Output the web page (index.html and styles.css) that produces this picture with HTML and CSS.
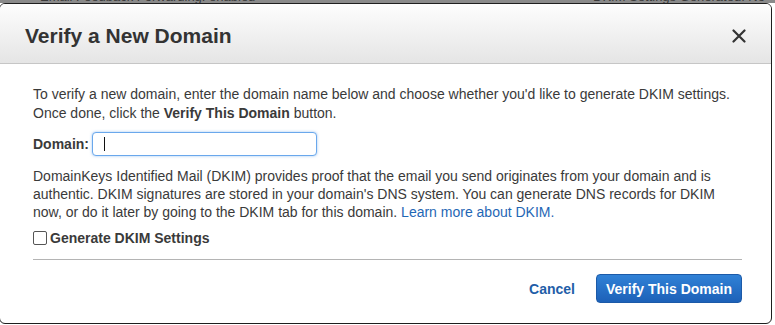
FILE: index.html
```html
<!DOCTYPE html>
<html lang="en">
<head>
    <meta charset="UTF-8">
    <meta name="viewport" content="width=device-width, initial-scale=1.0">
    <title>Verify a New Domain</title>
    <link rel="stylesheet" href="styles.css">
</head>
<body>

<!-- page behind the dialog, mostly hidden -->
<div class="backdrop">
    <span>Email Feedback Forwarding: enabled</span>
    <span>DKIM Settings Generated: No</span>
</div>

<div class="modal">
    <div class="modal-header">
        <h2>Verify a New Domain</h2>
        <button class="close-btn" aria-label="Close">
            <svg width="14" height="14" viewBox="0 0 14 14">
                <path d="M1.5 1.5 L12.5 12.5 M12.5 1.5 L1.5 12.5" stroke="#333" stroke-width="2.2" stroke-linecap="round"/>
            </svg>
        </button>
    </div>

    <div class="modal-body">
        <p class="intro">To verify a new domain, enter the domain name below and choose whether you'd like to generate DKIM settings. Once done, click the <b>Verify This Domain</b> button.</p>

        <div class="domain-row">
            <label for="domain">Domain:</label>
            <div class="domain-input">
                <span class="caret"></span>
                <input type="text" id="domain">
            </div>
        </div>

        <p class="dkim-info">DomainKeys Identified Mail (DKIM) provides proof that the email you send originates from your domain and is authentic. DKIM signatures are stored in your domain's DNS system. You can generate DNS records for DKIM now, or do it later by going to the DKIM tab for this domain. <a href="#">Learn more about DKIM.</a></p>

        <label class="check-row">
            <span class="checkbox"></span>
            Generate DKIM Settings
        </label>

        <div class="modal-footer">
            <a href="#" class="cancel-link">Cancel</a>
            <button class="verify-btn">Verify This Domain</button>
        </div>
    </div>
</div>

</body>
</html>
```

FILE: styles.css
```css
body {
    font-family: 'Liberation Sans', Arial, sans-serif;
    margin: 0;
    padding: 0;
    background-color: #fff;
    color: #333;
    overflow: hidden;
}

.backdrop {
    height: 3px;
    overflow: hidden;
    background-color: #8a8a8a;
    display: flex;
    justify-content: space-between;
    padding: 0 10px 0 40px;
    font-size: 13px;
    line-height: 3px;
    color: #3a3a3a;
}

.backdrop span {
    margin-top: -5px;
}

.modal {
    width: 771px;
    height: 319px;
    margin-left: -1px;
    background-color: #fff;
    border: 1px solid #1e1e1e;
    border-radius: 6px;
    overflow: hidden;
}

.modal-header {
    height: 59px;
    background: linear-gradient(to bottom, #fdfdfd, #e5e5e5);
    border-bottom: 1px solid #c6c6c6;
    display: flex;
    align-items: center;
    justify-content: space-between;
    padding: 0 25px 0 25px;
}

.modal-header h2 {
    margin: 0;
    font-size: 21px;
    font-weight: bold;
    color: #333;
    padding-top: 4px;
}

.close-btn {
    background: none;
    border: none;
    padding: 0;
    margin-top: 4px;
    cursor: pointer;
    display: flex;
}

.modal-body {
    padding: 21px 29px 0 33px;
    font-size: 14px;
    line-height: 18px;
    color: #3a3a3a;
}

.modal-body p {
    margin: 0;
}

.intro {
    line-height: 19px;
}

.domain-row {
    display: flex;
    align-items: center;
    margin-top: 9px;
}

.domain-row label {
    font-weight: bold;
    margin-right: 3px;
}

.domain-input {
    position: relative;
}

.domain-input input {
    width: 225px;
    height: 24px;
    box-sizing: border-box;
    border: 1px solid #6aa8ec;
    border-radius: 4px;
    box-shadow: 0 0 3px rgba(80, 150, 230, 0.55);
    outline: none;
    padding: 0 10px;
    font-size: 14px;
    font-family: inherit;
}

.caret {
    position: absolute;
    left: 12px;
    top: 5px;
    width: 1px;
    height: 14px;
    background-color: #111;
}

.dkim-info {
    margin-top: 11px !important;
}

.dkim-info a {
    color: #1f67b5;
    text-decoration: none;
}

.check-row {
    display: flex;
    align-items: center;
    margin-top: 8px;
    font-weight: bold;
}

.checkbox {
    width: 12px;
    height: 12px;
    border: 1px solid #555;
    border-radius: 2px;
    margin-right: 3px;
    background-color: #fff;
}

.modal-footer {
    margin-top: 12px;
    border-top: 1px solid #b4b4b4;
    display: flex;
    justify-content: flex-end;
    align-items: center;
    padding-top: 14px;
}

.cancel-link {
    color: #1f5ea8;
    font-weight: bold;
    font-size: 14px;
    text-decoration: none;
    margin-right: 21px;
}

.verify-btn {
    background: linear-gradient(to bottom, #3081d6, #1d61b8);
    color: #fff;
    border: 1px solid #1c5aa8;
    border-radius: 4px;
    font-family: inherit;
    font-size: 14px;
    font-weight: bold;
    padding: 0 9px;
    height: 29px;
    cursor: pointer;
}
```
